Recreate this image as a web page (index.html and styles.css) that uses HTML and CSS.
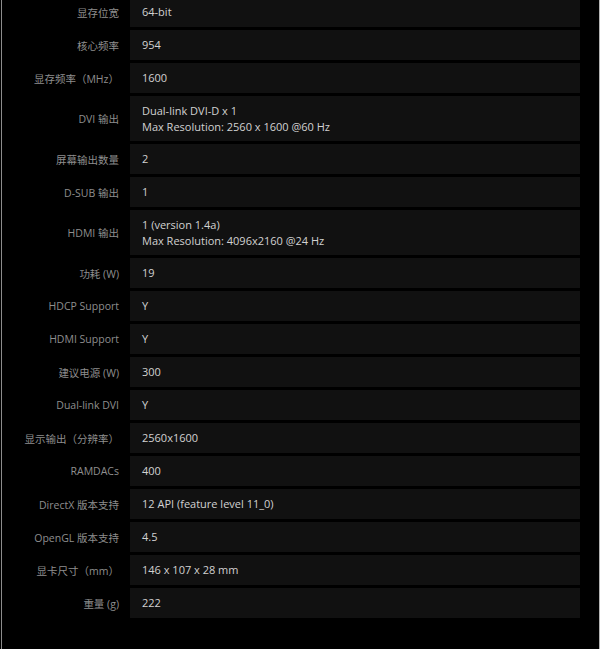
FILE: index.html
```html
<!DOCTYPE html>
<html lang="zh">
<head>
<meta charset="utf-8">
<title>Specs</title>
<link rel="stylesheet" href="styles.css">
</head>
<body>
<div class="frame">
  <div class="specs">
    <div class="row"><div class="label">显存位宽</div><div class="value">64-bit</div></div>
    <div class="row"><div class="label">核心频率</div><div class="value">954</div></div>
    <div class="row"><div class="label">显存频率（MHz）</div><div class="value">1600</div></div>
    <div class="row tall"><div class="label">DVI 输出</div><div class="value">Dual-link DVI-D x 1<br>Max Resolution: 2560 x 1600 @60 Hz</div></div>
    <div class="row"><div class="label">屏幕输出数量</div><div class="value">2</div></div>
    <div class="row"><div class="label">D-SUB 输出</div><div class="value">1</div></div>
    <div class="row tall"><div class="label">HDMI 输出</div><div class="value">1 (version 1.4a)<br>Max Resolution: 4096x2160 @24 Hz</div></div>
    <div class="row"><div class="label">功耗 (W)</div><div class="value">19</div></div>
    <div class="row"><div class="label">HDCP Support</div><div class="value">Y</div></div>
    <div class="row"><div class="label">HDMI Support</div><div class="value">Y</div></div>
    <div class="row"><div class="label">建议电源 (W)</div><div class="value">300</div></div>
    <div class="row"><div class="label">Dual-link DVI</div><div class="value">Y</div></div>
    <div class="row"><div class="label">显示输出（分辨率）</div><div class="value">2560x1600</div></div>
    <div class="row"><div class="label">RAMDACs</div><div class="value">400</div></div>
    <div class="row"><div class="label">DirectX 版本支持</div><div class="value">12 API (feature level 11_0)</div></div>
    <div class="row"><div class="label">OpenGL 版本支持</div><div class="value">4.5</div></div>
    <div class="row"><div class="label">显卡尺寸（mm）</div><div class="value">146 x 107 x 28 mm</div></div>
    <div class="row"><div class="label">重量 (g)</div><div class="value">222</div></div>
  </div>
</div>
</body>
</html>
```

FILE: styles.css
```css
html, body {
  margin: 0;
  padding: 0;
  background: #000;
}
body {
  width: 600px;
  height: 649px;
  overflow: hidden;
  font-family: "Open Sans", "Noto Sans CJK SC", sans-serif;
  font-size: 11px;
}
.frame {
  margin-left: 1px;
  width: 597px;
  height: 660px;
  border-left: 1px solid #8c8c8c;
  border-right: 1px solid #b4b4b4;
  background: #000;
}
.specs {
  display: flex;
  flex-direction: column;
  gap: 3px;
  margin-top: -3px;
}
.row {
  display: grid;
  grid-template-columns: 128px 450px;
  height: 30px;
}
.row.tall {
  height: 45px;
}
.label {
  display: flex;
  align-items: center;
  justify-content: flex-end;
  padding-right: 11px;
  color: #8e8e8e;
  font-size: 10.5px;
  white-space: nowrap;
}
.value {
  display: flex;
  flex-direction: column;
  justify-content: center;
  padding-left: 12px;
  background: #111111;
  color: #d2d2d2;
  line-height: 16px;
  white-space: nowrap;
}
```
